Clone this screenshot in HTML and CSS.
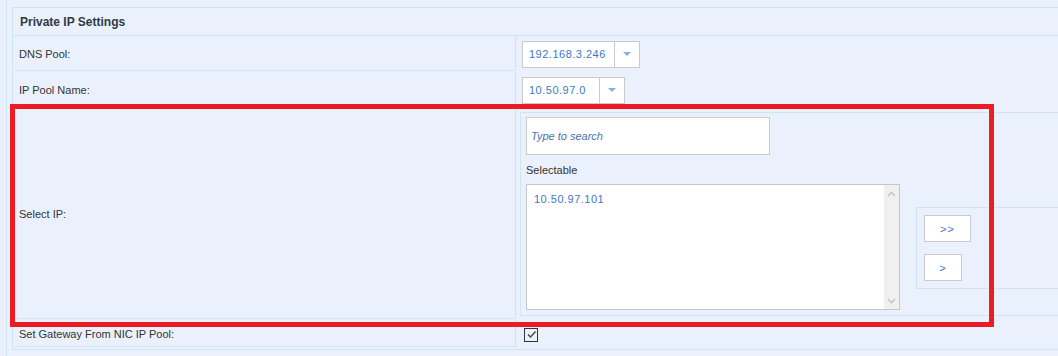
FILE: index.html
```html
<!DOCTYPE html>
<html>
<head>
<meta charset="utf-8">
<link rel="stylesheet" href="styles.css">
</head>
<body>
<div class="outer">
  <div class="panel">
    <div class="header">Private IP Settings</div>

    <div class="row row-dns">
      <div class="label">DNS Pool:</div>
      <div class="value value-select">
        <div class="select">
          <div class="select-text select-text-wide">192.168.3.246</div>
          <div class="select-arrow"><span class="tri"></span></div>
        </div>
      </div>
    </div>

    <div class="row row-ip">
      <div class="label">IP Pool Name:</div>
      <div class="value value-select">
        <div class="select">
          <div class="select-text select-text-narrow">10.50.97.0</div>
          <div class="select-arrow"><span class="tri"></span></div>
        </div>
      </div>
    </div>

    <div class="row row-selectip">
      <div class="label">Select IP:</div>
      <div class="value value-picker">
        <div class="picker">
          <div class="picker-col">
            <div class="search">Type to search</div>
            <div class="caption">Selectable</div>
            <div class="listbox">
              <div class="list-items">
                <div class="list-item">10.50.97.101</div>
              </div>
              <div class="scrollbar">
                <svg class="chev" width="9" height="6" viewBox="0 0 9 6"><path d="M1 5 L4.5 1.5 L8 5" fill="none" stroke="#c6c6c6" stroke-width="1.6"/></svg>
                <svg class="chev" width="9" height="6" viewBox="0 0 9 6"><path d="M1 1 L4.5 4.5 L8 1" fill="none" stroke="#c6c6c6" stroke-width="1.6"/></svg>
              </div>
            </div>
          </div>
          <div class="btn-panel">
            <div class="btn btn-all">&gt;&gt;</div>
            <div class="btn btn-one">&gt;</div>
          </div>
        </div>
      </div>
    </div>

    <div class="row row-gw">
      <div class="label">Set Gateway From NIC IP Pool:</div>
      <div class="value value-check">
        <div class="checkbox">
          <svg width="11" height="11" viewBox="0 0 11 11"><path d="M2 5.5 L4.5 8 L9.5 2.5" fill="none" stroke="#444" stroke-width="1.3"/></svg>
        </div>
      </div>
    </div>
  </div>
</div>
<div class="highlight"></div>
</body>
</html>
```

FILE: styles.css
```css
html, body {
  margin: 0;
  padding: 0;
}

body {
  background: #eaf1fd;
  font-family: "Liberation Sans", Arial, sans-serif;
  font-size: 11px;
  color: #333;
  width: 1058px;
  height: 356px;
  overflow: hidden;
  position: relative;
}

.outer {
  margin-left: 6px;
  border-left: 1px solid #cfe6f0;
  padding-left: 5px;
  padding-top: 7px;
  height: 349px;
}

.panel {
  width: 1200px;
  border: 1px solid #cfe6f0;
  border-right: none;
  padding: 0 0 2px 2px;
}

.header {
  box-sizing: border-box;
  height: 28px;
  padding-top: 2px;
  line-height: 25px;
  border-bottom: 1px solid #cfe6f0;
  margin-left: -2px;
  padding-left: 7px;
  font-weight: bold;
  font-size: 12px;
  color: #2f3a46;
}

.row {
  display: grid;
  grid-template-columns: 501px 1fr;
  margin-top: 1px;
}

.row-dns {
  margin-top: 0;
  height: 35px;
}

.row-ip {
  height: 35px;
}

.row-selectip {
  height: 211px;
}

.row-gw {
  height: 27px;
}

.label {
  box-sizing: border-box;
  border-right: 1px solid #cfe6f0;
  border-bottom: 1px solid #cfe6f0;
  padding-left: 4px;
  display: flex;
  align-items: center;
  padding-top: 2px;
  color: #333;
}

.value {
  display: flex;
  align-items: center;
}

.value-select {
  padding-left: 6px;
  padding-top: 1px;
}

.select {
  display: flex;
  box-sizing: border-box;
  height: 27px;
  border: 1px solid #cacaca;
  background: #fff;
}

.select-text {
  line-height: 25px;
  padding-left: 6px;
  color: #3b79c3;
  box-sizing: border-box;
  letter-spacing: 0.5px;
}

.select-text-wide {
  width: 91px;
}

.select-text-narrow {
  width: 76px;
}

.select-arrow {
  width: 24px;
  border-left: 1px solid #cacaca;
  display: flex;
  align-items: center;
  justify-content: center;
}

.tri {
  width: 0;
  height: 0;
  border-left: 4px solid transparent;
  border-right: 4px solid transparent;
  border-top: 4px solid #80b3e3;
}

.value-picker {
  align-items: flex-start;
  padding: 4px 0 0 4px;
}

.picker {
  box-sizing: border-box;
  width: 700px;
  height: 204px;
  border: 1px solid #cfe6f0;
  border-right: none;
  padding: 4px 0 5px 5px;
  display: flex;
  align-items: flex-start;
}

.picker-col {
  width: 374px;
  display: flex;
  flex-direction: column;
}

.search {
  box-sizing: border-box;
  width: 244px;
  height: 38px;
  border: 1px solid #cacaca;
  background: #fff;
  padding-left: 4px;
  line-height: 36px;
  font-style: italic;
  color: #4b74aa;
}

.caption {
  height: 29px;
  line-height: 31px;
  color: #333;
}

.listbox {
  box-sizing: border-box;
  height: 126px;
  border: 1px solid #c6c6c6;
  background: #fff;
  display: flex;
}

.list-items {
  flex: 1;
  padding: 8px 7px;
}

.list-item {
  color: #3b79c3;
  letter-spacing: 0.5px;
}

.scrollbar {
  width: 15px;
  background: #f0f0f0;
  display: flex;
  flex-direction: column;
  justify-content: space-between;
  align-items: center;
  padding: 6px 0 5px;
}

.chev {
  display: block;
}

.btn-panel {
  box-sizing: border-box;
  margin-left: 16px;
  margin-top: 90px;
  width: 200px;
  height: 82px;
  border: 1px solid #cfe6f0;
  border-right: none;
  padding: 7px 0 0 7px;
  display: flex;
  flex-direction: column;
  align-items: flex-start;
  gap: 12px;
}

.btn {
  box-sizing: border-box;
  height: 27px;
  border: 1px solid #cacaca;
  background: #fff;
  color: #3b79c3;
  display: flex;
  align-items: center;
  justify-content: center;
  font-size: 11px;
  letter-spacing: 1px;
}

.btn-all {
  width: 47px;
}

.btn-one {
  width: 38px;
}

.value-check {
  padding-left: 8px;
  padding-top: 2px;
}

.checkbox {
  box-sizing: border-box;
  width: 14px;
  height: 14px;
  border: 1px solid #333;
  display: flex;
  align-items: center;
  justify-content: center;
}

.checkbox svg {
  display: block;
}

.highlight {
  position: absolute;
  left: 10px;
  top: 104px;
  width: 984px;
  height: 223px;
  box-sizing: border-box;
  border: 5px solid #ed1c24;
}
```
